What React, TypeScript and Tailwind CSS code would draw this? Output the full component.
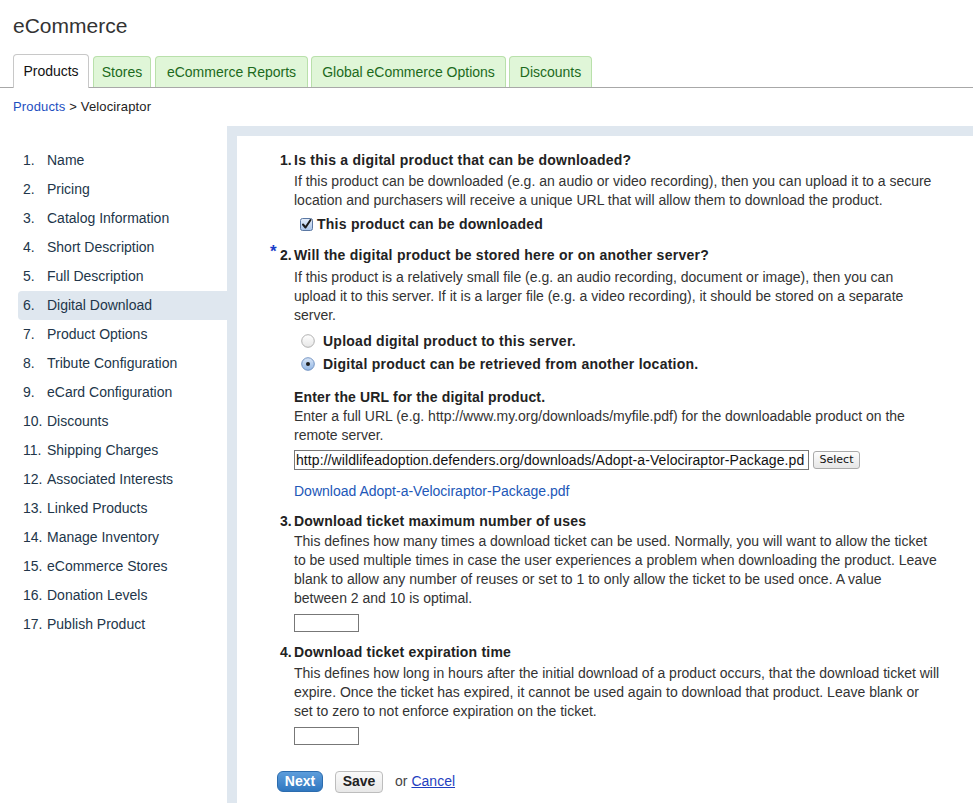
import React from "react";

function CheckBox() {
  return (
    <svg width="13" height="13" viewBox="0 0 13 13" className="shrink-0">
      <defs>
        <linearGradient id="cbg" x1="0" y1="0" x2="0" y2="1">
          <stop offset="0" stopColor="#e6eefa" />
          <stop offset="1" stopColor="#a9c4ea" />
        </linearGradient>
      </defs>
      <rect x="0.5" y="0.5" width="12" height="12" rx="2" fill="url(#cbg)" stroke="#5b78a3" />
      <path d="M3 6.5 L5.5 9.5 L10.5 2" fill="none" stroke="#1b1b1b" strokeWidth="2" strokeLinecap="round" strokeLinejoin="round" />
    </svg>
  );
}

function Radio({ checked }: { checked?: boolean }) {
  return (
    <svg width="14" height="14" viewBox="0 0 14 14" className="shrink-0">
      <defs>
        <linearGradient id="rg0" x1="0" y1="0" x2="0" y2="1">
          <stop offset="0" stopColor="#ffffff" />
          <stop offset="1" stopColor="#e6e6e6" />
        </linearGradient>
        <linearGradient id="rg1" x1="0" y1="0" x2="0" y2="1">
          <stop offset="0" stopColor="#d9e6f7" />
          <stop offset="1" stopColor="#92b6e4" />
        </linearGradient>
      </defs>
      <circle cx="7" cy="7" r="6.3" fill={checked ? "url(#rg1)" : "url(#rg0)"} stroke={checked ? "#6a8cbd" : "#a8a8a8"} strokeWidth="0.9" />
      {checked && <circle cx="7" cy="7" r="2" fill="#1d1d1d" />}
    </svg>
  );
}

const sideItems = [
  "Name",
  "Pricing",
  "Catalog Information",
  "Short Description",
  "Full Description",
  "Digital Download",
  "Product Options",
  "Tribute Configuration",
  "eCard Configuration",
  "Discounts",
  "Shipping Charges",
  "Associated Interests",
  "Linked Products",
  "Manage Inventory",
  "eCommerce Stores",
  "Donation Levels",
  "Publish Product",
];

export default function App() {
  return (
    <div className="min-h-[803px] flex flex-col bg-white text-[#333] font-['Liberation_Sans',Arial,sans-serif]">
      {/* Header */}
      <div className="pt-[14px] pl-[13px] text-[21px] leading-[24px] text-[#333]">eCommerce</div>
      <div className="mt-[16px] flex items-end h-[34px] border-b border-[#a8a8a8] pl-[13px] text-[14px]">
        <div className="w-[76px] h-[34px] -mb-px bg-white border border-b-0 border-[#c8c8c8] rounded-t-[4px] flex items-center justify-center text-[#111]">
          Products
        </div>
        <div className="ml-[4px] w-[58px] h-[31px] bg-[#e0f6d8] border border-b-0 border-[#b9e0ab] rounded-t-[4px] flex items-center justify-center text-[#1c6a1c]">
          Stores
        </div>
        <div className="ml-[4px] w-[153px] h-[31px] bg-[#e0f6d8] border border-b-0 border-[#b9e0ab] rounded-t-[4px] flex items-center justify-center text-[#1c6a1c]">
          eCommerce Reports
        </div>
        <div className="ml-[3px] w-[195px] h-[31px] bg-[#e0f6d8] border border-b-0 border-[#b9e0ab] rounded-t-[4px] flex items-center justify-center text-[#1c6a1c]">
          Global eCommerce Options
        </div>
        <div className="ml-[3px] w-[83px] h-[31px] bg-[#e0f6d8] border border-b-0 border-[#b9e0ab] rounded-t-[4px] flex items-center justify-center text-[#1c6a1c]">
          Discounts
        </div>
      </div>
      <div className="mt-[11px] pl-[13px] text-[13px] leading-[16px] text-[#222] tracking-[0.15px]">
        <a className="text-[#1d4fbf]">Products</a> &gt; Velociraptor
      </div>

      {/* Body */}
      <div className="mt-[11px] flex flex-1">
        <div className="w-[227px] shrink-0 pt-[20px] pl-[18px]">
          {sideItems.map((s, i) => (
            <div
              key={s}
              className={
                "h-[29px] flex items-center pl-[5px] text-[14px] text-[#22364a] rounded-l-[4px] " +
                (i === 5 ? "bg-[#dfe7ef]" : "")
              }
            >
              <span className="w-[24px] shrink-0">{i + 1}.</span>
              <span>{s}</span>
            </div>
          ))}
        </div>
        <div className="flex-1 bg-[#dfe7ef] pt-[10px] pl-[10px] flex">
          <div className="flex-1 bg-white pl-[33px] pt-[14px] pb-[12px] text-[14px]">
            {/* Q1 */}
            <div className="flex">
              <div className="w-[10px] shrink-0" />
              <div className="w-[14px] shrink-0 font-bold leading-[20px] text-[#222]">1.</div>
              <div className="flex-1">
                <div className="font-bold leading-[20px] text-[#222] tracking-[0.25px]">Is this a digital product that can be downloaded?</div>
                <div className="mt-[2px] leading-[19px] whitespace-nowrap">
                  If this product can be downloaded (e.g. an audio or video recording), then you can upload it to a secure
                  <br />
                  location and purchasers will receive a unique URL that will allow them to download the product.
                </div>
                <div className="mt-[4px] h-[20px] flex items-center pl-[6px] gap-[4px] font-bold text-[#222] tracking-[0.25px]">
                  <CheckBox />
                  <span>This product can be downloaded</span>
                </div>
              </div>
            </div>

            {/* Q2 */}
            <div className="flex mt-[11px]">
              <div className="w-[10px] shrink-0 text-[#1a3cc8] font-bold text-[17px] leading-[14px]">*</div>
              <div className="w-[14px] shrink-0 font-bold leading-[20px] text-[#222]">2.</div>
              <div className="flex-1">
                <div className="font-bold leading-[20px] text-[#222] tracking-[0.25px]">Will the digital product be stored here or on another server?</div>
                <div className="mt-[3px] leading-[19px] whitespace-nowrap">
                  If this product is a relatively small file (e.g. an audio recording, document or image), then you can
                  <br />
                  upload it to this server. If it is a larger file (e.g. a video recording), it should be stored on a separate
                  <br />
                  server.
                </div>
                <div className="mt-[5px] h-[22px] flex items-center pl-[7px] gap-[8px] font-bold text-[#222] tracking-[0.25px]">
                  <Radio />
                  <span>Upload digital product to this server.</span>
                </div>
                <div className="mt-[1px] h-[22px] flex items-center pl-[7px] gap-[8px] font-bold text-[#222] tracking-[0.25px]">
                  <Radio checked />
                  <span>Digital product can be retrieved from another location.</span>
                </div>

                <div className="mt-[12px] font-bold leading-[20px] text-[#222] tracking-[0.15px]">Enter the URL for the digital product.</div>
                <div className="leading-[19px] whitespace-nowrap">
                  Enter a full URL (e.g. http://www.my.org/downloads/myfile.pdf) for the downloadable product on the
                  <br />
                  remote server.
                </div>
                <div className="mt-[5px] flex items-center gap-[4px]">
                  <div className="w-[515px] h-[20px] border border-[#777] flex items-center pl-[1px] text-[14px] tracking-[0.08px] text-[#111] whitespace-nowrap">
                    http://wildlifeadoption.defenders.org/downloads/Adopt-a-Velociraptor-Package.pd
                  </div>
                  <div className="w-[47px] h-[18px] border border-[#aaa] rounded-[3px] bg-gradient-to-b from-[#fdfdfd] to-[#e6e6e6] flex items-center justify-center text-[11px] text-[#111] font-['Lucida_Grande','DejaVu_Sans',sans-serif]">
                    Select
                  </div>
                </div>
                <div className="mt-[12px] leading-[19px]">
                  <a className="text-[#2257b8]">Download Adopt-a-Velociraptor-Package.pdf</a>
                </div>
              </div>
            </div>

            {/* Q3 */}
            <div className="flex mt-[10px]">
              <div className="w-[10px] shrink-0" />
              <div className="w-[14px] shrink-0 font-bold leading-[20px] text-[#222]">3.</div>
              <div className="flex-1">
                <div className="font-bold leading-[20px] text-[#222] tracking-[0.2px]">Download ticket maximum number of uses</div>
                <div className="mt-[1px] leading-[19px] whitespace-nowrap">
                  This defines how many times a download ticket can be used. Normally, you will want to allow the ticket
                  <br />
                  to be used multiple times in case the user experiences a problem when downloading the product. Leave
                  <br />
                  blank to allow any number of reuses or set to 1 to only allow the ticket to be used once. A value
                  <br />
                  between 2 and 10 is optimal.
                </div>
                <div className="mt-[6px] w-[65px] h-[18px] border border-[#777]" />
              </div>
            </div>

            {/* Q4 */}
            <div className="flex mt-[10px]">
              <div className="w-[10px] shrink-0" />
              <div className="w-[14px] shrink-0 font-bold leading-[20px] text-[#222]">4.</div>
              <div className="flex-1">
                <div className="font-bold leading-[20px] text-[#222] tracking-[0.2px]">Download ticket expiration time</div>
                <div className="mt-[2px] leading-[19px] whitespace-nowrap">
                  This defines how long in hours after the initial download of a product occurs, that the download ticket will
                  <br />
                  expire. Once the ticket has expired, it cannot be used again to download that product. Leave blank or
                  <br />
                  set to zero to not enforce expiration on the ticket.
                </div>
                <div className="mt-[6px] w-[65px] h-[18px] border border-[#777]" />
              </div>
            </div>

            {/* Buttons */}
            <div className="mt-[26px] ml-[7px] flex items-center h-[21px]">
              <div className="w-[46px] h-[21px] rounded-[6px] border border-[#2c6cae] bg-gradient-to-b from-[#5d9ddb] to-[#2f77c0] flex items-center justify-center text-white font-bold text-[14px]">
                Next
              </div>
              <div className="ml-[12px] w-[48px] h-[22px] rounded-[4px] border border-[#bdbdbd] bg-gradient-to-b from-[#fafafa] to-[#e8e8e8] flex items-center justify-center text-[#222] font-bold text-[14px]">
                Save
              </div>
              <span className="ml-[12px] text-[14px] text-[#444]">or</span>
              <a className="ml-[4px] text-[14px] text-[#1f3fc0] underline">Cancel</a>
            </div>
          </div>
        </div>
      </div>
    </div>
  );
}
